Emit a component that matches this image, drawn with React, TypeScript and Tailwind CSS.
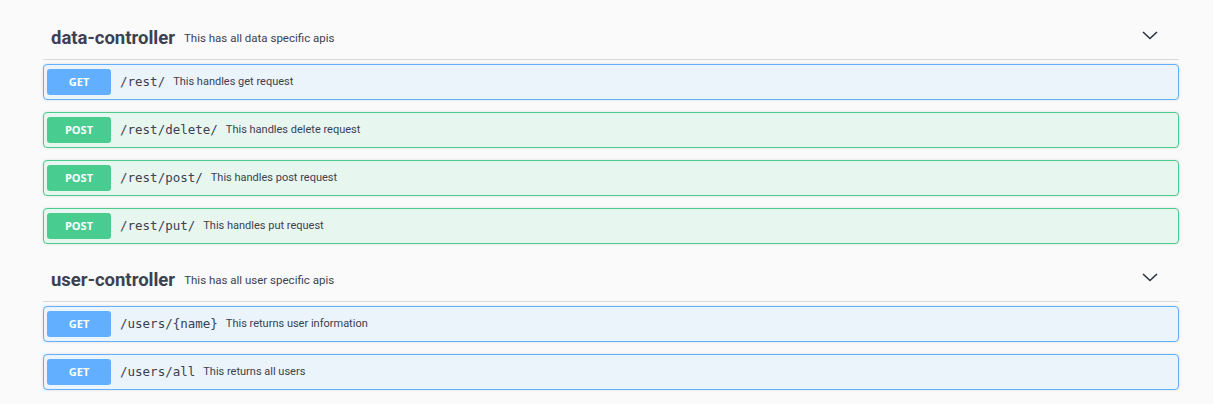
import React from "react";

type Op = { method: "GET" | "POST"; path: string; summary: string };

type Tag = { name: string; description: string; ops: Op[] };

const tags: Tag[] = [
  {
    name: "data-controller",
    description: "This has all data specific apis",
    ops: [
      { method: "GET", path: "/rest/", summary: "This handles get request" },
      { method: "POST", path: "/rest/delete/", summary: "This handles delete request" },
      { method: "POST", path: "/rest/post/", summary: "This handles post request" },
      { method: "POST", path: "/rest/put/", summary: "This handles put request" },
    ],
  },
  {
    name: "user-controller",
    description: "This has all user specific apis",
    ops: [
      { method: "GET", path: "/users/{name}", summary: "This returns user information" },
      { method: "GET", path: "/users/all", summary: "This returns all users" },
    ],
  },
];

const Chevron = () => (
  <svg width="16" height="10" viewBox="0 0 16 10" className="shrink-0 mb-[8px]">
    <polyline
      points="1,2 8,8.5 15,2"
      fill="none"
      stroke="#2d3240"
      strokeWidth="1.6"
    />
  </svg>
);

const OpBlock: React.FC<{ op: Op }> = ({ op }) => {
  const isGet = op.method === "GET";
  return (
    <div
      className={`flex items-center h-[36px] px-[3px] rounded-[4px] border shadow-[0_0_3px_rgba(0,0,0,0.12)] ${
        isGet ? "bg-[#ebf3fb] border-[#61affe]" : "bg-[#e8f6f0] border-[#49cc90]"
      }`}
    >
      <span
        className={`flex items-center justify-center w-[64px] h-[26px] rounded-[3px] text-white text-[11px] font-bold font-['Open_Sans',sans-serif] ${
          isGet ? "bg-[#61affe]" : "bg-[#49cc90]"
        }`}
      >
        {op.method}
      </span>
      <span className="ml-[9px] text-[12.5px] text-[#3b4151] font-['DejaVu_Sans_Mono',monospace]">
        {op.path}
      </span>
      <span className="ml-[8px] text-[11px] text-[#3b4151]">{op.summary}</span>
    </div>
  );
};

export default function App() {
  return (
    <div className="min-h-screen bg-[#fafafa] pt-[15px] font-['Roboto',sans-serif]">
      <div className="ml-[43px] w-[1136px]">
        {tags.map((tag) => (
          <div key={tag.name} className="mb-[13px]">
            <div className="flex items-center h-[45px] border-b border-[#d8d9dc] pt-[4px] pl-[8px] pr-[21px]">
              <span className="text-[18.5px] font-bold text-[#3b4151]">{tag.name}</span>
              <span className="ml-[9px] text-[11.5px] text-[#3b4151]">{tag.description}</span>
              <div className="flex-1" />
              <Chevron />
            </div>
            <div className="mt-[4px] flex flex-col gap-[12px]">
              {tag.ops.map((op) => (
                <OpBlock key={op.path} op={op} />
              ))}
            </div>
          </div>
        ))}
      </div>
    </div>
  );
}
